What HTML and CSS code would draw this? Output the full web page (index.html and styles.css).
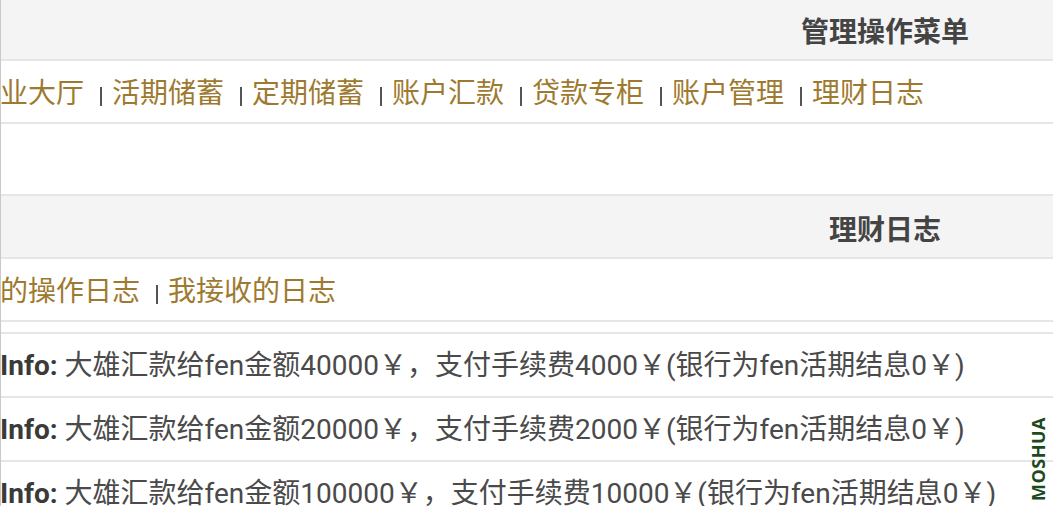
FILE: index.html
```html
<!DOCTYPE html>
<html lang="zh-CN">
<head>
  <meta charset="UTF-8">
  <meta name="viewport" content="width=device-width, initial-scale=1">
  <title>理财日志</title>
  <link rel="stylesheet" href="styles.css">
</head>
<body>

  <div class="frame">
    <div class="page">

      <div class="box">
        <div class="box-head">管理操作菜单</div>
        <div class="box-nav">
          <a href="#">营业大厅</a><span class="sep"></span>
          <a href="#">活期储蓄</a><span class="sep"></span>
          <a href="#">定期储蓄</a><span class="sep"></span>
          <a href="#">账户汇款</a><span class="sep"></span>
          <a href="#">贷款专柜</a><span class="sep"></span>
          <a href="#">账户管理</a><span class="sep"></span>
          <a href="#">理财日志</a>
        </div>
      </div>

      <div class="box box-log">
        <div class="box-head">理财日志</div>
        <div class="box-nav">
          <a href="#">我的操作日志</a><span class="sep"></span>
          <a href="#">我接收的日志</a>
        </div>
      </div>

      <div class="log-list">
        <div class="log-row"><b>Info:</b> 大雄汇款给fen金额40000￥，支付手续费4000￥(银行为fen活期结息0￥)</div>
        <div class="log-row"><b>Info:</b> 大雄汇款给fen金额20000￥，支付手续费2000￥(银行为fen活期结息0￥)</div>
        <div class="log-row"><b>Info:</b> 大雄汇款给fen金额100000￥，支付手续费10000￥(银行为fen活期结息0￥)</div>
      </div>

    </div>
  </div>

  <div class="mark">MOSHUA</div>

</body>
</html>
```

FILE: styles.css
```css
body {
  margin: 0;
  overflow: hidden;
  background: #fff;
  font-family: Roboto, "Noto Sans CJK SC", sans-serif;
  color: #444;
}

.frame {
  height: 100vh;
  overflow: hidden;
  border-left: 1px solid #c9c9c9;
}

.page {
  width: 1830px;
  margin-left: -31px;
  margin-top: -4px;
}

.box-head {
  height: 65px;
  box-sizing: border-box;
  padding-top: 2px;
  display: flex;
  align-items: center;
  justify-content: center;
  background-color: #f4f4f4;
  border-top: 2px solid #e6e6e6;
  border-bottom: 2px solid #e6e6e6;
  font-size: 28px;
  font-weight: bold;
  color: #444;
}

.box-nav {
  height: 63px;
  box-sizing: border-box;
  padding-left: 2px;
  border-bottom: 2px solid #e6e6e6;
  line-height: 66px;
  white-space: nowrap;
}

.box-nav a {
  color: #9e7a30;
  text-decoration: none;
  font-size: 28px;
}

.sep {
  display: inline-block;
  width: 2px;
  height: 19px;
  background-color: #555;
  margin: 0 6px 0 16px;
  vertical-align: -3px;
}

.box-log {
  margin-top: 70px;
}

.log-list {
  margin-top: 10px;
  border-top: 2px solid #e6e6e6;
}

.log-row {
  height: 64px;
  box-sizing: border-box;
  line-height: 64px;
  padding-left: 30px;
  border-bottom: 2px solid #e6e6e6;
  font-size: 28px;
  color: #4a4a4a;
  white-space: pre;
}

.log-row b {
  color: #3a3a3a;
}

/* watermark in the bottom-right corner */
.mark {
  position: absolute;
  right: 3px;
  bottom: 5px;
  writing-mode: vertical-rl;
  transform: rotate(180deg);
  font-family: "Open Sans", sans-serif;
  font-weight: bold;
  font-size: 18px;
  letter-spacing: 0.5px;
  color: #1d4a1d;
}
```
